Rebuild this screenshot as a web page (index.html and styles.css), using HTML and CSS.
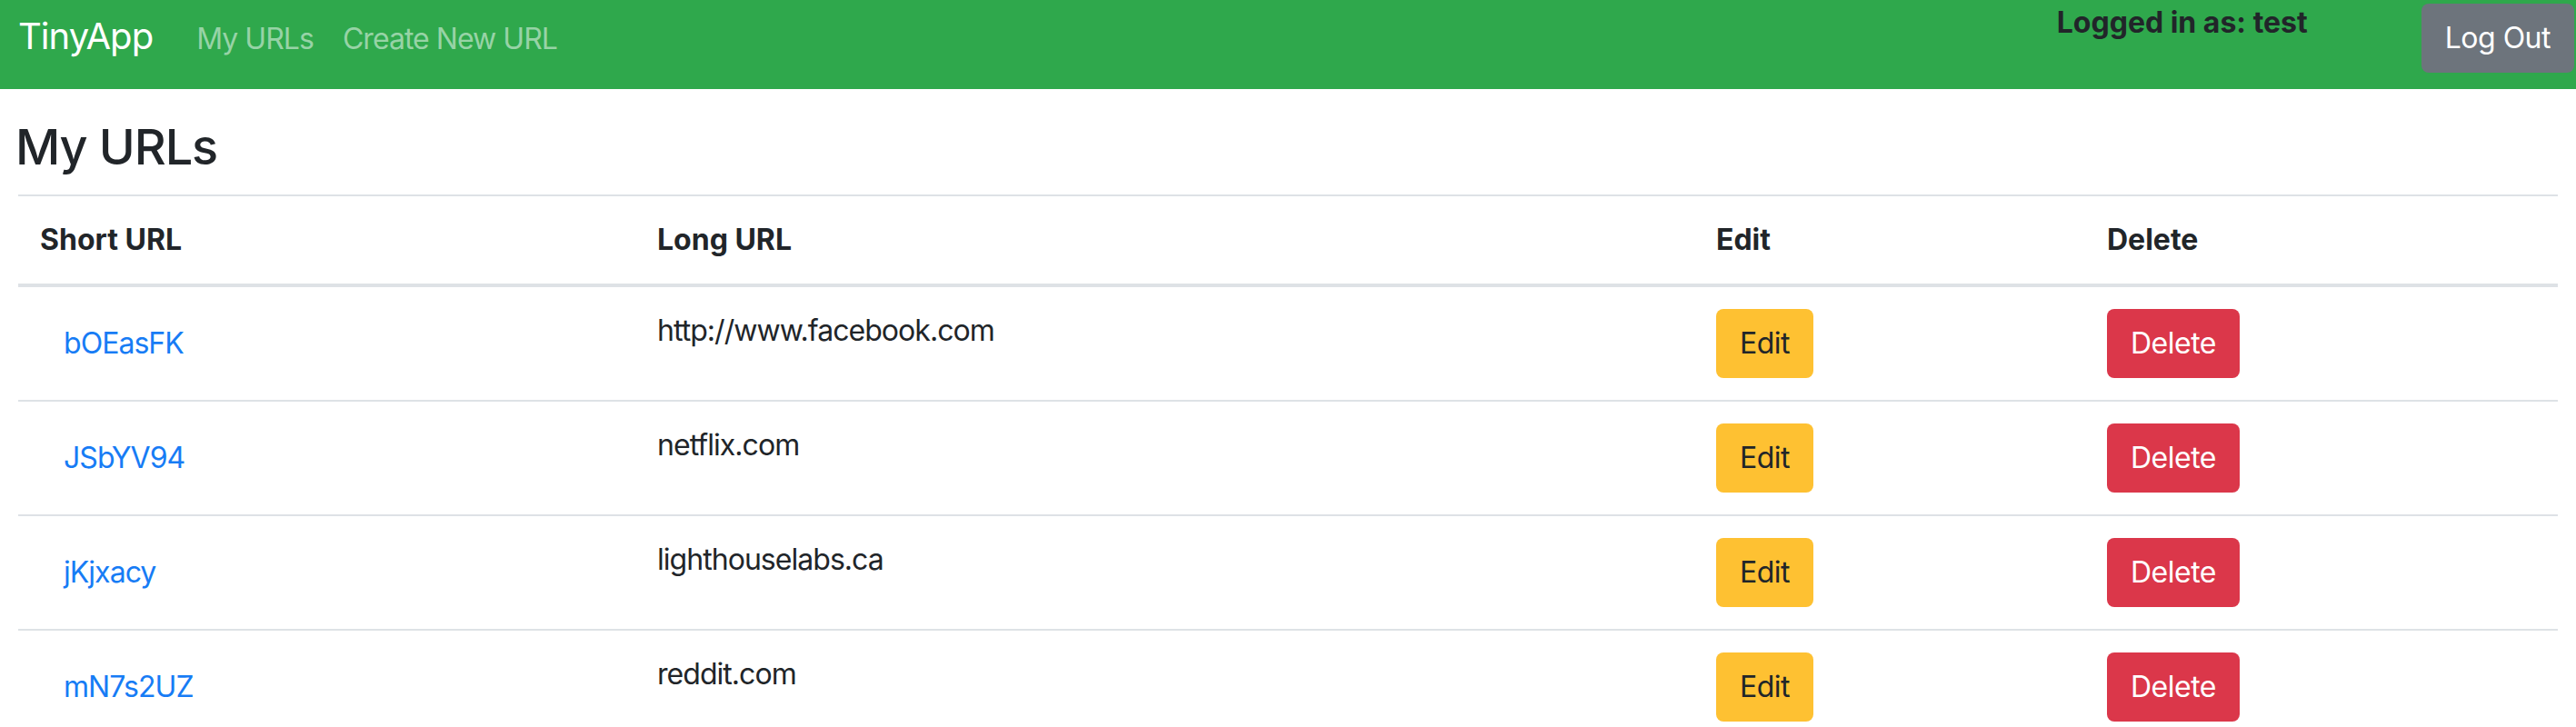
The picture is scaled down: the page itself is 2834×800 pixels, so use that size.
FILE: index.html
```html
<!DOCTYPE html>
<html lang="en">
<head>
<meta charset="utf-8">
<title>TinyApp</title>
<link rel="stylesheet" href="styles.css">
</head>
<body>
<nav class="navbar">
  <div class="nav-left">
    <a class="brand" href="#">TinyApp</a>
    <a class="nav-link" href="#">My URLs</a>
    <a class="nav-link" href="#">Create New URL</a>
  </div>
  <div class="nav-right">
    <span class="user">Logged in as: test</span>
    <button class="btn btn-secondary">Log Out</button>
  </div>
</nav>
<main class="content">
  <h2 class="title">My URLs</h2>
  <table class="table">
    <colgroup>
      <col class="col-short">
      <col class="col-long">
      <col class="col-edit">
      <col class="col-delete">
    </colgroup>
    <thead>
      <tr><th>Short URL</th><th>Long URL</th><th>Edit</th><th>Delete</th></tr>
    </thead>
    <tbody>
      <tr>
        <td><a class="btn btn-link" href="#">bOEasFK</a></td>
        <td>http://www.facebook.com</td>
        <td><button class="btn btn-warning">Edit</button></td>
        <td><button class="btn btn-danger">Delete</button></td>
      </tr>
      <tr>
        <td><a class="btn btn-link" href="#">JSbYV94</a></td>
        <td>netflix.com</td>
        <td><button class="btn btn-warning">Edit</button></td>
        <td><button class="btn btn-danger">Delete</button></td>
      </tr>
      <tr>
        <td><a class="btn btn-link" href="#">jKjxacy</a></td>
        <td>lighthouselabs.ca</td>
        <td><button class="btn btn-warning">Edit</button></td>
        <td><button class="btn btn-danger">Delete</button></td>
      </tr>
      <tr>
        <td><a class="btn btn-link" href="#">mN7s2UZ</a></td>
        <td>reddit.com</td>
        <td><button class="btn btn-warning">Edit</button></td>
        <td><button class="btn btn-danger">Delete</button></td>
      </tr>
    </tbody>
  </table>
</main>
</body>
</html>
```
FILE: styles.css
```css
* { box-sizing: border-box; }
body {
  margin: 0;
  font-family: Inter, "Liberation Sans", sans-serif;
  font-size: 32px;
  line-height: 48px;
  letter-spacing: -0.03em;
  color: #212529;
  background: #fff;
}
.navbar {
  height: 98px;
  background: #2fa84c;
  display: flex;
  justify-content: space-between;
  align-items: flex-start;
}
.nav-left {
  display: flex;
  align-items: baseline;
  padding: 16px 0 0 20px;
}
.brand {
  font-size: 40px;
  line-height: 48px;
  color: #fff;
  text-decoration: none;
  margin-right: 32px;
}
.nav-link {
  color: #97d3a6;
  text-decoration: none;
  padding: 0 16px;
}
.nav-right {
  display: flex;
  align-items: flex-start;
}
.user {
  font-weight: 700;
  letter-spacing: 0;
  padding-top: 1px;
  margin-right: 125px;
}
.btn {
  display: inline-block;
  font-family: inherit;
  font-size: 32px;
  line-height: 48px;
  font-weight: 400;
  letter-spacing: -0.5px;
  padding: 12px 24px;
  border: 2px solid transparent;
  border-radius: 8px;
  text-decoration: none;
  cursor: pointer;
}
.btn-secondary {
  background: #6d747c;
  color: #fff;
  margin: 4px 2px 0 0;
}
.btn-link { color: #177cf5; background: transparent; letter-spacing: -0.03em; }
.btn-warning { background: #fec132; color: #212529; }
.btn-danger { background: #db374a; color: #fff; }
.content {
  padding: 0 20px;
}
.title {
  font-size: 54px;
  line-height: 64px;
  font-weight: 500;
  letter-spacing: -0.02em;
  margin: 32px 0 20px -3px;
}
.table {
  width: 100%;
  border-collapse: collapse;
  table-layout: fixed;
}
.col-short { width: 679px; }
.col-long { width: 1165px; }
.col-edit { width: 430px; }
.table th, .table td {
  padding: 24px;
  text-align: left;
  vertical-align: top;
  border-top: 2px solid #dee2e6;
}
.table th { font-weight: 700; letter-spacing: 0; }
.table thead th { border-bottom: 4px solid #dee2e6; }
```
